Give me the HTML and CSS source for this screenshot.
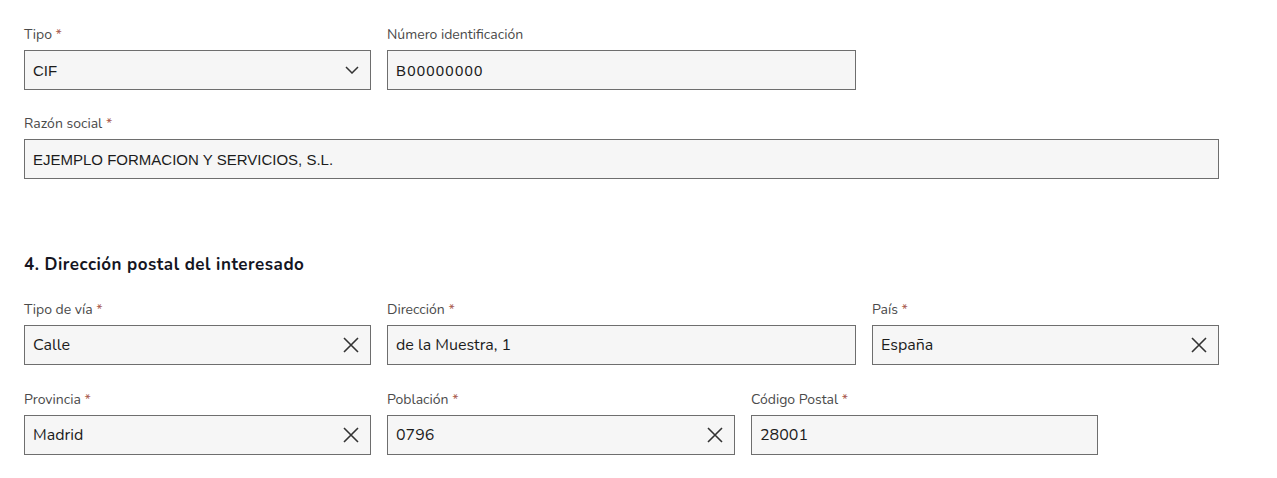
FILE: index.html
```html
<!DOCTYPE html>
<html lang="es">
<head>
<meta charset="utf-8">
<title>Formulario</title>
<link rel="stylesheet" href="styles.css">
</head>
<body>
<div class="form">
  <section class="section section-a">
    <div class="row">
      <div class="field w347">
        <div class="label">Tipo <span class="req">*</span></div>
        <div class="input">
          <span class="value arial">CIF</span>
          <svg class="icon chevron" width="14" height="8" viewBox="0 0 14 8"><polyline points="1,1 7,7 13,1" fill="none" stroke="#333" stroke-width="1.5"/></svg>
        </div>
      </div>
      <div class="field w469">
        <div class="label">Número identificación</div>
        <div class="input"><span class="value arial spaced">B00000000</span></div>
      </div>
    </div>
    <div class="row">
      <div class="field wfull">
        <div class="label">Razón social <span class="req">*</span></div>
        <div class="input"><span class="value arial">EJEMPLO FORMACION Y SERVICIOS, S.L.</span></div>
      </div>
    </div>
  </section>

  <h2 class="heading">4. Dirección postal del interesado</h2>

  <section class="section section-b">
    <div class="row">
      <div class="field w347">
        <div class="label">Tipo de vía <span class="req">*</span></div>
        <div class="input">
          <span class="value">Calle</span>
          <svg class="icon clear" width="16" height="16" viewBox="0 0 16 16"><path d="M1 1L15 15M15 1L1 15" stroke="#333" stroke-width="1.6" fill="none"/></svg>
        </div>
      </div>
      <div class="field w469">
        <div class="label">Dirección <span class="req">*</span></div>
        <div class="input"><span class="value">de la Muestra, 1</span></div>
      </div>
      <div class="field w347">
        <div class="label">País <span class="req">*</span></div>
        <div class="input">
          <span class="value">España</span>
          <svg class="icon clear" width="16" height="16" viewBox="0 0 16 16"><path d="M1 1L15 15M15 1L1 15" stroke="#333" stroke-width="1.6" fill="none"/></svg>
        </div>
      </div>
    </div>
    <div class="row">
      <div class="field w347">
        <div class="label">Provincia <span class="req">*</span></div>
        <div class="input">
          <span class="value">Madrid</span>
          <svg class="icon clear" width="16" height="16" viewBox="0 0 16 16"><path d="M1 1L15 15M15 1L1 15" stroke="#333" stroke-width="1.6" fill="none"/></svg>
        </div>
      </div>
      <div class="field w348">
        <div class="label">Población <span class="req">*</span></div>
        <div class="input">
          <span class="value">0796</span>
          <svg class="icon clear" width="16" height="16" viewBox="0 0 16 16"><path d="M1 1L15 15M15 1L1 15" stroke="#333" stroke-width="1.6" fill="none"/></svg>
        </div>
      </div>
      <div class="field w347">
        <div class="label">Código Postal <span class="req">*</span></div>
        <div class="input"><span class="value">28001</span></div>
      </div>
    </div>
  </section>
</div>
</body>
</html>
```

FILE: styles.css
```css
* { box-sizing: border-box; }
html, body { margin: 0; padding: 0; background: #ffffff; }
body {
  font-family: "Nunito", "Lato", "Open Sans", sans-serif;
  color: #1c1c1c;
}
.form {
  width: 1195px;
  margin-left: 24px;
  padding-top: 24px;
}
.section { display: flex; flex-direction: column; }
.section-a { gap: 23px; }
.section-b { gap: 24px; }
.row { display: flex; gap: 16px; }
.w347 { width: 347px; }
.w348 { width: 348px; }
.w469 { width: 469px; }
.wfull { width: 1195px; }
.label {
  font-size: 14px;
  line-height: 20px;
  padding-top: 1px;
  color: #4a4a4a;
  margin-bottom: 5px;
}
.req { color: #a95a4c; }
.input {
  height: 40px;
  border: 1px solid #6e6e6e;
  background: #f6f6f6;
  padding: 0 11px 0 8px;
  display: flex;
  align-items: center;
  justify-content: space-between;
}
.value {
  font-size: 16px;
  color: #1c1c1c;
}
.arial {
  font-family: "Liberation Sans", Arial, sans-serif;
  font-size: 15px;
}
.spaced { letter-spacing: 1.2px; }
.icon { flex: none; display: block; }
.heading {
  margin: 74px 0 22px 0;
  font-size: 17px;
  line-height: 24px;
  font-weight: 700;
  letter-spacing: 0.5px;
  color: #15151f;
}
```
